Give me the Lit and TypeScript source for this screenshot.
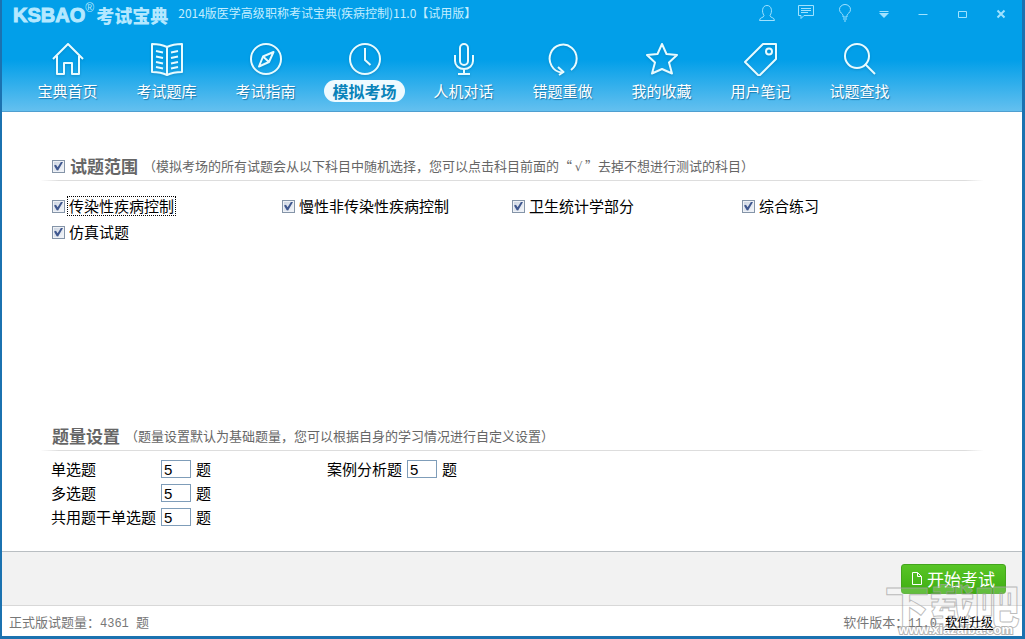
import { LitElement, html, css, svg } from "lit";
import { customElement, state } from "lit/decorators.js";
import { classMap } from "lit/directives/class-map.js";

const navIcons = {
  home: svg`<path d="M2 17 17 2 32 17M6 14V32H13V21H21V32H28V14"/>`,
  book: svg`<path d="M17 5V33M17 5C13 3 7 2 2 2V30C7 30 13 31 17 33C21 31 27 30 32 30V2C27 2 21 3 17 5ZM6 9 13 10.500M6 14.500 13 16M6 20 13 21.500M6 25 13 26.500M28 9 21 10.500M28 14.500 21 16M28 20 21 21.500M28 25 21 26.500"/>`,
  compass: svg`<circle cx="17" cy="17" r="15"/><path d="M24.500 10 20 20 10 24.500 14 14.500ZM14 14.500 20 20"/>`,
  clock: svg`<circle cx="17" cy="17" r="15"/><path d="M17 6V18L22.500 23"/>`,
  mic: svg`<rect x="13" y="2" width="8" height="21" rx="4"/><path d="M8 13V19A9 8 0 0 0 26 19V13M17 27V32M11 32H23"/>`,
  redo: svg`<path d="M25 28A13.500 14 0 1 0 15.500 30.500M12 25 17.500 30 13 33"/>`,
  star: svg`<path d="M17 2 21.500 12 32 13 24 20.500 27 31.500 17 27 7 31.500 10 20.500 2 13 12.500 12Z"/>`,
  tag: svg`<path d="M19 2H32V17L15 34 1 20Z"/><circle cx="25" cy="9.500" r="3"/>`,
  search: svg`<circle cx="14" cy="14" r="12"/><path d="M22 22 32 32"/>`,
};

const navItems: { label: string; icon: keyof typeof navIcons }[] = [
  { label: "宝典首页", icon: "home" },
  { label: "考试题库", icon: "book" },
  { label: "考试指南", icon: "compass" },
  { label: "模拟考场", icon: "clock" },
  { label: "人机对话", icon: "mic" },
  { label: "错题重做", icon: "redo" },
  { label: "我的收藏", icon: "star" },
  { label: "用户笔记", icon: "tag" },
  { label: "试题查找", icon: "search" },
];

const windowButtons = [
  { label: "用户", icon: svg`<path d="M6 11.500C3.500 8 4 1.500 9 1.500S14.500 8 12 11.500C12 14 16.500 13 16.500 16.500H1.500C1.500 13 6 14 6 11.500Z"/>` },
  { label: "消息", icon: svg`<path d="M1.500 1.500H16.500V11.500H7L4 14.500V11.500H1.500ZM4 4.500H14M4 6.500H14M4 8.500H11"/>` },
  { label: "提示", icon: svg`<path d="M7 13V11.500C7 9.500 3.500 9 3.500 5.500A5.500 5 0 0 1 14.500 5.500C14.500 9 11 9.500 11 11.500V13ZM7 15H11M8 17H10"/>` },
  { label: "菜单", icon: svg`<path d="M4.500 7.500H13.500"/><path class="solid" d="M4 9H14L9 14Z"/>` },
  { label: "最小化", icon: svg`<path d="M4.500 10.500H13.500"/>` },
  { label: "最大化", icon: svg`<path d="M5.500 7.500H13.500V13.500H5.500Z"/>` },
  { label: "关闭", icon: svg`<path stroke-width="2" d="M5.500 6.500 12.500 13.500M12.500 6.500 5.500 13.500"/>` },
];

@customElement("app-root")
export class AppRoot extends LitElement {
  static styles = css`
    :host {
      display: block;
      font-family: "Noto Sans CJK SC", "Liberation Sans", sans-serif;
      color: #000;
    }
    * { box-sizing: border-box; }
    button { border: 0; padding: 0; background: none; font: inherit; color: inherit; }
    .window {
      position: relative;
      display: flex;
      flex-direction: column;
      min-height: 100vh;
      overflow: hidden;
      background: #fff;
      border: solid #1b72b0;
      border-width: 0 3px 3px 2px;
    }
    .header {
      height: 112px;
      background: linear-gradient(#029fe9 0, #029fe9 54%, #64c0ef 100%);
      border-bottom: 1px solid #4f9fd0;
    }
    .titlebar { display: flex; height: 26px; align-items: center; padding: 0 2px 0 11px; color: #c3eeff; }
    .logo { display: flex; margin: 0; padding-top: 4px; line-height: 28px; font-size: 18px; font-weight: 900; color: #b4e8ff; }
    .brand { font: bold 20px/28px "Liberation Sans", sans-serif; -webkit-text-stroke: 1px #b4e8ff; }
    .reg { width: 11px; font: 12px/14px "Liberation Sans", sans-serif; }
    .caption { flex: 1; padding-left: 10px; font-size: 12px; line-height: 26px; white-space: nowrap; }
    .controls { display: flex; }
    .control { display: grid; place-items: center; width: 39px; height: 26px; }
    .control svg { width: 18px; height: 18px; fill: none; stroke: #9fe2ff; stroke-width: 1; }
    .control .solid { fill: #9fe2ff; stroke: none; }
    .nav { display: flex; padding: 16px 0 0 16px; }
    .tab {
      display: flex;
      flex-direction: column;
      align-items: center;
      gap: 4px;
      width: 99px;
      color: #fff;
      text-decoration: none;
    }
    .tab svg {
      width: 34px;
      height: 34px;
      fill: none;
      stroke: #e8fbff;
      stroke-width: 2;
      stroke-linejoin: round;
      filter: drop-shadow(0 1px 1px #0878b080);
    }
    .tab span {
      padding: 0 9px;
      border-radius: 11px;
      font-size: 15px;
      line-height: 22px;
      text-shadow: 1px 1px 1px #1a78ac;
      white-space: nowrap;
    }
    .tab.active span { background: #eefaff; color: #0983b9; font-weight: 700; font-size: 16px; padding: 0 8px; text-shadow: none; }
    .main {
      flex: 1;
      display: flex;
      flex-direction: column;
      justify-content: space-between;
      padding: 40px 39px 22px;
    }
    .heading {
      display: flex;
      align-items: center;
      gap: 5px;
      height: 29px;
      padding-left: 11px;
      border-bottom: 1px solid;
      border-image: linear-gradient(90deg, #fff, #ddd 2%, #ddd 98%, #fff) 1;
      color: #666;
    }
    .heading h2 { margin: 0; font-size: 17px; line-height: 28px; }
    .heading label, .subject { display: flex; align-items: center; gap: 5px; }
    .heading p { margin: 0; font-size: 13px; line-height: 28px; white-space: nowrap; }
    .tick { display: inline-block; width: 13px; text-align: center; font-family: "DejaVu Sans", sans-serif; font-size: 12px; line-height: 16px; }
    .check {
      flex: none;
      appearance: none;
      display: grid;
      place-items: center;
      width: 13px;
      height: 13px;
      margin: 0;
      border: 1px solid #8494a8;
      background: linear-gradient(135deg, #c9d2e0, #f6f8fb);
      box-shadow: inset 0 0 0 1px #eef1f6;
    }
    .check:checked::before {
      content: "";
      width: 9px;
      height: 9px;
      background: #40588f;
      clip-path: polygon(0 45%, 22% 36%, 40% 64%, 80% 0, 100% 6%, 46% 100%, 30% 96%);
    }
    .subjects {
      display: grid;
      grid-template-columns: repeat(4, 230px);
      grid-auto-rows: 26px;
      padding: 12px 0 0 11px;
      font-size: 15px;
    }
    .subject { gap: 3px; }
    .subject span { padding: 0 1px; line-height: 18px; white-space: nowrap; }
    .subject .focus { outline: 1px dotted #000; }
    .amounts {
      display: grid;
      grid-template-columns: 276px 1fr;
      grid-auto-rows: 24px;
      padding: 6px 0 0 10px;
      font-size: 15px;
      line-height: 24px;
    }
    .amount { grid-column: 1; display: flex; align-items: center; gap: 5px; white-space: nowrap; }
    .amount label { min-width: 105px; }
    .amount.side { grid-column: 2; grid-row: 1; }
    .amount.side label { min-width: 75px; }
    .amount input {
      width: 30px;
      height: 18px;
      padding: 0 2px;
      border: 1px solid #7f9db9;
      border-radius: 0;
      background: #fff;
      font: 15px/16px "Liberation Sans", sans-serif;
    }
    .actions {
      display: flex;
      justify-content: flex-end;
      align-items: center;
      height: 55px;
      padding-right: 16px;
      background: #f2f2f2;
      border: solid #b9bec2;
      border-width: 1px 0;
      border-bottom-color: #d8d8d8;
    }
    .start {
      display: flex;
      align-items: center;
      justify-content: center;
      gap: 5px;
      width: 105px;
      height: 30px;
      border-radius: 3px;
      background: linear-gradient(#58c526, #3fae12);
      border: 1px solid #43a51c;
      color: #fff;
      font-size: 17px;
      line-height: 28px;
      white-space: nowrap;
    }
    .start svg { width: 10px; height: 13px; fill: none; stroke: #fff; }
    .status {
      display: flex;
      justify-content: space-between;
      height: 30px;
      padding: 0 29px 0 7px;
      font-size: 13px;
      line-height: 32px;
      color: #777;
    }
    .status > span { position: relative; z-index: 1; }
    .num { font-family: "Liberation Mono", monospace; font-size: 12px; }
    .upgrade { margin-left: 8px; font-size: 12px; color: #000; text-underline-offset: 2px; }
    .watermark {
      position: absolute;
      right: 2px;
      bottom: 0;
      width: 136px;
      height: 60px;
      text-align: center;
      pointer-events: none;
      color: #ffffff30;
      -webkit-text-stroke: 1px #a0a0a0b0;
      font-weight: 900;
      font-size: 45px;
      line-height: 58px;
      white-space: nowrap;
    }
    .watermark small {
      position: absolute;
      right: 7px;
      bottom: -2px;
      font: bold 13px/16px "Liberation Sans", sans-serif;
      color: #fff;
      -webkit-text-stroke: 2px #b4b4b4;
      paint-order: stroke fill;
    }
  `;

  @state() private active = "模拟考场";

  private subjects = ["传染性疾病控制", "慢性非传染性疾病控制", "卫生统计学部分", "综合练习", "仿真试题"];
  private amounts = ["单选题", "多选题", "共用题干单选题", "案例分析题"];

  render() {
    return html`
      <div class="window" lang="zh-CN">
        <header class="header">
          <div class="titlebar">
            <h1 class="logo"><span class="brand">KSBAO</span><span class="reg">®</span>考试宝典</h1>
            <div class="caption">2014版医学高级职称考试宝典(疾病控制)11.0【试用版】</div>
            <div class="controls">
              ${windowButtons.map((b) => html`
                <button class="control" aria-label=${b.label}><svg viewBox="0 0 18 18">${b.icon}</svg></button>`)}
            </div>
          </div>
          <nav class="nav">
            ${navItems.map((n) => html`
              <a href="#" class=${classMap({ tab: true, active: n.label === this.active })}
                @click=${(e: Event) => { e.preventDefault(); this.active = n.label; }}>
                <svg viewBox="0 0 34 34">${navIcons[n.icon]}</svg><span>${n.label}</span>
              </a>`)}
          </nav>
        </header>

        <main class="main">
          <section>
            <div class="heading">
              <label><input class="check" type="checkbox" checked /><h2>试题范围</h2></label>
              <p>（模拟考场的所有试题会从以下科目中随机选择，您可以点击科目前面的“<span class="tick">√</span>”去掉不想进行测试的科目）</p>
            </div>
            <div class="subjects">
              ${this.subjects.map((s, i) => html`
                <label class="subject"><input class="check" type="checkbox" checked /><span class=${classMap({ focus: i === 0 })}>${s}</span></label>`)}
            </div>
          </section>
          <section>
            <div class="heading">
              <h2>题量设置</h2>
              <p>（题量设置默认为基础题量，您可以根据自身的学习情况进行自定义设置）</p>
            </div>
            <div class="amounts">
              ${this.amounts.map((a, i) => html`
                <div class=${classMap({ amount: true, side: i === 3 })}>
                  <label for="amount-${i}">${a}</label><input id="amount-${i}" type="text" value="5" /><span>题</span>
                </div>`)}
            </div>
          </section>
        </main>

        <div class="actions">
          <button class="start"><svg viewBox="0 0 10 13"><path d="M.5 .5H5.500L9.500 4.500V12.500H.5ZM5.500 .5V4.500H9.500" /></svg>开始考试</button>
        </div>
        <footer class="status">
          <span>正式版试题量：<span class="num">4361 </span>题</span>
          <span>软件版本：<span class="num">11.0</span><a class="upgrade" href="#">软件升级</a></span>
        </footer>
        <div class="watermark" aria-hidden="true">下载吧<small>www.xiazaiba.com</small></div>
      </div>
    `;
  }
}
